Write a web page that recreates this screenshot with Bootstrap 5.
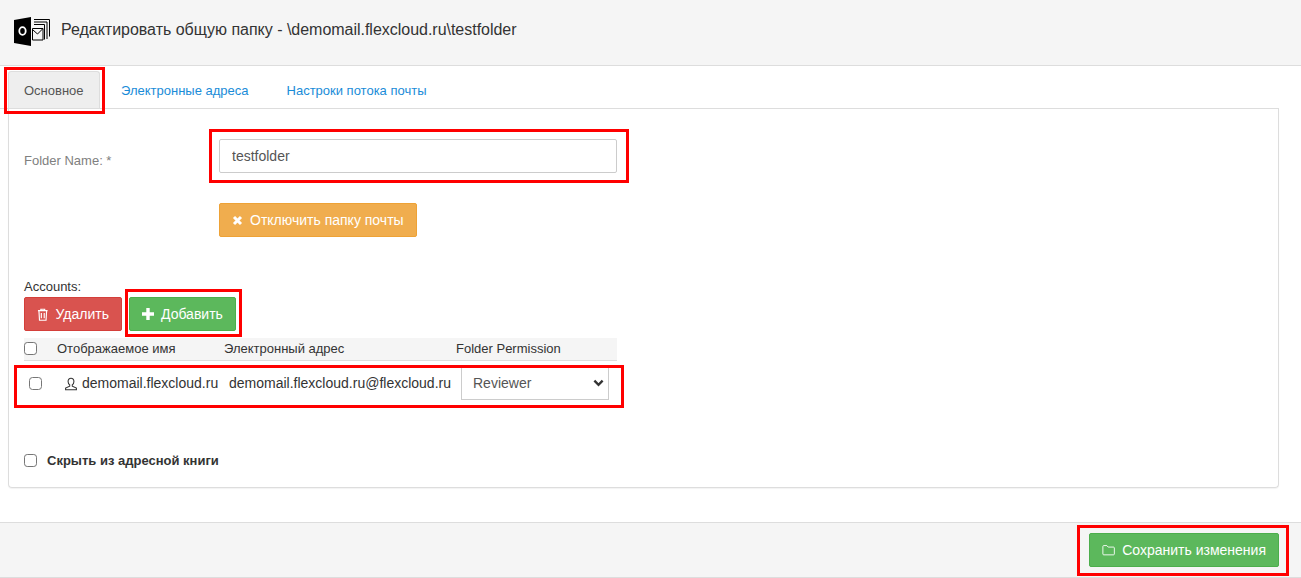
<!DOCTYPE html>
<html lang="ru">
<head>
<meta charset="utf-8">
<title>Редактировать общую папку</title>
<link href="https://cdn.jsdelivr.net/npm/bootstrap@5.3.0/dist/css/bootstrap.min.css" rel="stylesheet">
<style>
html,body{height:578px;overflow:hidden}
body{font-family:"Liberation Sans",Arial,sans-serif;font-size:14px;color:#333;background:#fff;position:relative}
.top-head{height:66px;background:#f5f5f5;border-bottom:1px solid #ddd;padding-left:14px;gap:11px}
.top-title{font-size:16px;color:#333;margin:0;font-weight:400;line-height:1;padding-bottom:6px;letter-spacing:-.02px}
.top-head svg{margin-bottom:3px}
.tab-strip{padding:5px 0 0 8px;height:43px;margin-right:22px;border-bottom:1px solid #ddd}
.tab-strip a{font-size:13px;line-height:15px;text-decoration:none;color:#1a8cd8;padding:12px 16px 10px;margin-right:6px;display:block;height:37px;white-space:nowrap}
.tab-strip a.on{color:#555;background:#eee;border:1px solid #ddd;border-bottom:0;border-radius:3px 3px 0 0;width:92px;padding-left:15px;padding-top:11px;margin-right:5px}
.pane{margin:0 22px 0 8px;height:379px;border:1px solid #ddd;border-top:0;border-radius:0 0 4px 4px;box-shadow:0 1px 1px rgba(0,0,0,.05);padding:30px 0 0 15px}
.fld-label{width:195px;font-size:13px;line-height:15px;color:#808080;padding-top:14px;margin:0}
.fld-input{width:398px;height:34px;font-size:14px;color:#555;border:1px solid #ccc;border-radius:2px;padding:6px 12px}
.fld-input:focus{box-shadow:none;border-color:#ccc}
.act{height:34px;font-size:14px;line-height:20px;color:#fff;border-radius:2px;padding:6px 12px;display:inline-flex;align-items:center;gap:7px;white-space:nowrap;border-width:1px}
.act-warn{background:#f0ad4e;border-color:#eea236;margin:30px 0 0 195px;width:198px}
.act-del{background:#d9534f;border-color:#d43f3a;width:98px}
.act-add{background:#5cb85c;border-color:#4cae4c;width:107px}
.act-save{background:#5cb85c;border-color:#4cae4c;width:190px}
.btn-row{gap:7px}
.acc-label{font-size:13px;line-height:15px;color:#333;margin:42px 0 3px}
.acc-table{table-layout:fixed;width:593px;margin-top:7px;border-collapse:collapse;font-size:14px}
.acc-table th{font-size:13px;font-weight:400;color:#333;background:#f5f5f5;height:22px;border-bottom:1px solid #ddd;padding:0}
.acc-table td{height:46px;padding:0 0 0 5px;white-space:nowrap;color:#333;font-size:14px}
.acc-table td.nm{padding-left:7px}
.tick{width:13px;height:13px;margin:0;border:1px solid #767676;border-radius:2.5px;display:block}
.perm{width:148px;height:33px;font-size:14px;color:#555;border:1px solid #ccc;border-radius:0;padding:0 12px 0 11px;background-image:url("data:image/svg+xml,%3csvg xmlns='http://www.w3.org/2000/svg' viewBox='0 0 12 8'%3e%3cpath fill='none' stroke='%23333' stroke-width='2.6' d='M1.500 1.500L6 6l4.500-4.500'/%3e%3c/svg%3e");background-size:11px 8px;background-position:right 4px center}
.hide-row{margin-top:45px;font-size:13px;font-weight:700;color:#333;gap:10px}
.foot-bar{margin-top:34px;height:56px;background:#f5f5f5;border-top:1px solid #ddd;border-bottom:1px solid #ddd;padding:10px 22px 0 0}
.mark-box{position:absolute;border:3px solid #f00;pointer-events:none}
.mb-tab{left:4px;top:67px;width:101px;height:47px}
.mb-input{left:209px;top:129px;width:420px;height:54px}
.mb-add{left:125px;top:289px;width:117px;height:48px}
.mb-row{left:14px;top:365px;width:610px;height:43px}
.mb-save{left:1077px;top:525px;width:212px;height:51px}
</style>
</head>
<body>
<header class="top-head d-flex align-items-center">
  <svg width="36" height="34" viewBox="0 0 36 34">
    <path d="M20 5.500h15.500v17M20 8h13v17M20 10.500h10.500v15" fill="none" stroke="#000" stroke-width="1"/>
    <path d="M18.500 14.500h10.500v11.500H18.500z" fill="#f5f5f5" stroke="#000"/>
    <path d="M19 16l4.500 4 5-5" fill="none" stroke="#000" stroke-width="1"/>
    <path d="M0 6L17 3v29L0 29z" fill="#000"/>
    <ellipse cx="8.500" cy="17" rx="3.200" ry="3.800" fill="none" stroke="#fff" stroke-width="1.800"/>
  </svg>
  <h1 class="top-title">Редактировать общую папку - \demomail.flexcloud.ru\testfolder</h1>
</header>
<nav class="tab-strip d-flex">
  <a class="on" href="#">Основное</a>
  <a href="#">Электронные адреса</a>
  <a href="#">Настроки потока почты</a>
</nav>
<main class="pane">
  <div class="d-flex">
    <label class="fld-label" for="fname">Folder Name: *</label>
    <input id="fname" class="form-control fld-input" value="testfolder">
  </div>
  <button class="btn act act-warn" type="button">
    <svg width="11" height="11" viewBox="0 0 11 11"><path d="M2 2l7 7M9 2l-7 7" stroke="#fff" stroke-width="3"/></svg>
    Отключить папку почты
  </button>
  <p class="acc-label">Accounts:</p>
  <div class="d-flex btn-row">
    <button class="btn act act-del" type="button">
      <svg width="12" height="13" viewBox="0 0 12 13"><path d="M1 2.500h10M4 2.500V1h4v1.500M2 2.500l.6 10h6.800l.6-10M4.500 5v5.500M7.500 5v5.500" fill="none" stroke="#fff" stroke-width="1.200"/></svg>
      Удалить
    </button>
    <button class="btn act act-add" type="button">
      <svg width="12" height="12" viewBox="0 0 12 12"><path d="M6 0v12M0 6h12" stroke="#fff" stroke-width="3.400"/></svg>
      Добавить
    </button>
  </div>
  <table class="acc-table">
    <colgroup><col style="width:33px"><col style="width:167px"><col style="width:232px"><col style="width:161px"></colgroup>
    <thead>
      <tr><th><input class="form-check-input tick" type="checkbox" aria-label="Выбрать все"></th><th>Отображаемое имя</th><th>Электронный адрес</th><th>Folder Permission</th></tr>
    </thead>
    <tbody>
      <tr>
        <td><input class="form-check-input tick" type="checkbox" aria-label="Выбрать"></td>
        <td class="nm"><svg class="me-1" width="14" height="14" viewBox="0 0 13 13"><path d="M6.500 1.200c-1.700 0-2.700 1.300-2.700 3 0 1.300.6 2.500 1.500 3.100v1.200L1.500 10.200v1.600h10v-1.600L7.700 8.500V7.300c.9-.6 1.500-1.800 1.500-3.100 0-1.700-1-3-2.700-3z" fill="none" stroke="#333" stroke-width="1"/></svg>demomail.flexcloud.ru</td>
        <td>demomail.flexcloud.ru@flexcloud.ru</td>
        <td><select class="form-select perm" aria-label="Folder Permission"><option>Reviewer</option></select></td>
      </tr>
    </tbody>
  </table>
  <label class="hide-row d-flex align-items-center">
    <input class="form-check-input tick" type="checkbox">
    Скрыть из адресной книги
  </label>
</main>
<footer class="foot-bar d-flex justify-content-end">
  <button class="btn act act-save" type="button">
    <svg width="16" height="14" viewBox="0 0 15 13"><path d="M1 2.500c0-.6.400-1 1-1h3.500l1.500 1.700h6c.6 0 1 .4 1 1v6.800c0 .6-.4 1-1 1H2c-.6 0-1-.4-1-1z" fill="none" stroke="#fff" stroke-width="1"/></svg>
    Сохранить изменения
  </button>
</footer>
<div class="mark-box mb-tab"></div>
<div class="mark-box mb-input"></div>
<div class="mark-box mb-add"></div>
<div class="mark-box mb-row"></div>
<div class="mark-box mb-save"></div>
</body>
</html>
